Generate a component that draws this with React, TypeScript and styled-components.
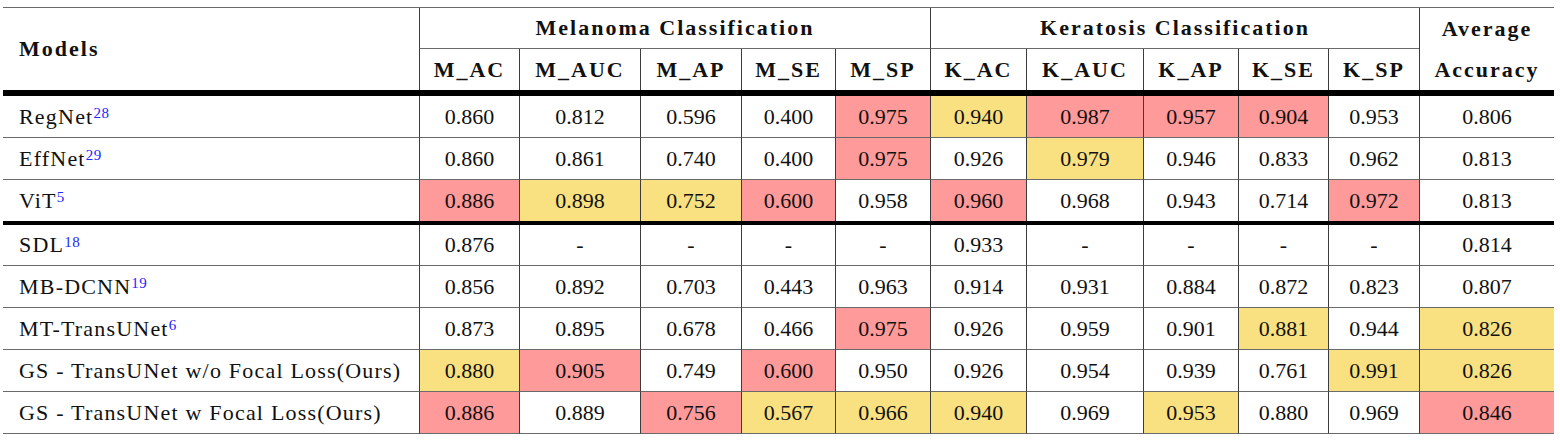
import React from "react";
import styled, { createGlobalStyle } from "styled-components";

const SERIF = `"Liberation Serif", "Times New Roman", Tinos, "DejaVu Serif", serif`;

const GlobalStyle = createGlobalStyle`
  html, body { margin: 0; padding: 0; background: #ffffff; }
  body { font-family: ${SERIF}; color: #111; }
`;

type HL = "r" | "y" | undefined;

const RED = "#ff9a9a";
const YELLOW = "#f9e181";
const VLINE = "#3c3c3c";
const HLINE = "#6a6a6a";

const Page = styled.div`
  padding: 7px 0 0 3px;
  font-family: ${SERIF};
`;

const Table = styled.div`
  display: grid;
  width: 1551px;
  font-family: ${SERIF};
  grid-template-columns: 416px 100px 121px 101px 94px 95px 96px 117px 95px 90px 91px 135px;
  grid-template-rows: 41px 41px 6px 42px 42px 41px 4px 41px 42px 42px 42px 42px;
  border-top: 1px solid ${HLINE};
`;

const HeadCell = styled.div<{ $col: string; $row: string; $cline?: boolean; $first?: boolean }>`
  grid-column: ${(p) => p.$col};
  grid-row: ${(p) => p.$row};
  box-sizing: border-box;
  display: flex;
  align-items: center;
  justify-content: ${(p) => (p.$first ? "flex-start" : "center")};
  padding-left: ${(p) => (p.$first ? "16px" : "0")};
  border-left: ${(p) => (p.$first ? "none" : `1px solid ${VLINE}`)};
  border-bottom: ${(p) => (p.$cline ? `1px solid ${HLINE}` : "none")};
  font-family: ${SERIF};
  font-weight: 700;
  font-size: 22px;
  letter-spacing: 2px;
  color: #111;
  white-space: nowrap;
`;

const StackCell = styled.div`
  grid-column: 12;
  grid-row: 1 / 3;
  box-sizing: border-box;
  border-left: 1px solid ${VLINE};
  display: flex;
  flex-direction: column;
  font-family: ${SERIF};
  font-weight: 700;
  font-size: 22px;
  letter-spacing: 2px;
  color: #111;
`;

const StackLine = styled.span`
  height: 41px;
  display: flex;
  align-items: center;
  justify-content: center;
`;

const Rule = styled.div`
  grid-column: 1 / -1;
  background: #000;
`;

const ModelCell = styled.div<{ $last?: boolean }>`
  box-sizing: border-box;
  display: flex;
  align-items: center;
  padding-left: 16px;
  font-family: ${SERIF};
  font-size: 22px;
  letter-spacing: 1.2px;
  white-space: nowrap;
  color: #111;
  border-bottom: ${(p) => (p.$last ? "none" : `1px solid ${HLINE}`)};
`;

const Sup = styled.sup`
  color: #2424ff;
  font-size: 15px;
  letter-spacing: 0.5px;
  position: relative;
  top: -3px;
`;

const NumCell = styled.div<{ $hl: HL; $last?: boolean }>`
  box-sizing: border-box;
  display: flex;
  align-items: center;
  justify-content: center;
  font-family: ${SERIF};
  font-size: 22px;
  color: #111;
  border-left: 1px solid ${VLINE};
  border-bottom: ${(p) => (p.$last ? "none" : `1px solid ${HLINE}`)};
  background: ${(p) => (p.$hl === "r" ? RED : p.$hl === "y" ? YELLOW : "transparent")};
`;

type Row = { name: string; ref: string; vals: [string, HL][]; last?: boolean };

const R = (s: string): [string, HL] => [s, "r"];
const Y = (s: string): [string, HL] => [s, "y"];
const N = (s: string): [string, HL] => [s, undefined];

const groupA: Row[] = [
  {
    name: "RegNet",
    ref: "28",
    vals: [N("0.860"), N("0.812"), N("0.596"), N("0.400"), R("0.975"), Y("0.940"), R("0.987"), R("0.957"), R("0.904"), N("0.953"), N("0.806")],
  },
  {
    name: "EffNet",
    ref: "29",
    vals: [N("0.860"), N("0.861"), N("0.740"), N("0.400"), R("0.975"), N("0.926"), Y("0.979"), N("0.946"), N("0.833"), N("0.962"), N("0.813")],
  },
  {
    name: "ViT",
    ref: "5",
    last: true,
    vals: [R("0.886"), Y("0.898"), Y("0.752"), R("0.600"), N("0.958"), R("0.960"), N("0.968"), N("0.943"), N("0.714"), R("0.972"), N("0.813")],
  },
];

const groupB: Row[] = [
  {
    name: "SDL",
    ref: "18",
    vals: [N("0.876"), N("-"), N("-"), N("-"), N("-"), N("0.933"), N("-"), N("-"), N("-"), N("-"), N("0.814")],
  },
  {
    name: "MB-DCNN",
    ref: "19",
    vals: [N("0.856"), N("0.892"), N("0.703"), N("0.443"), N("0.963"), N("0.914"), N("0.931"), N("0.884"), N("0.872"), N("0.823"), N("0.807")],
  },
  {
    name: "MT-TransUNet",
    ref: "6",
    vals: [N("0.873"), N("0.895"), N("0.678"), N("0.466"), R("0.975"), N("0.926"), N("0.959"), N("0.901"), Y("0.881"), N("0.944"), Y("0.826")],
  },
  {
    name: "GS - TransUNet w/o Focal Loss(Ours)",
    ref: "",
    vals: [Y("0.880"), R("0.905"), N("0.749"), R("0.600"), N("0.950"), N("0.926"), N("0.954"), N("0.939"), N("0.761"), Y("0.991"), Y("0.826")],
  },
  {
    name: "GS - TransUNet w Focal Loss(Ours)",
    ref: "",
    vals: [R("0.886"), N("0.889"), R("0.756"), Y("0.567"), Y("0.966"), Y("0.940"), N("0.969"), Y("0.953"), N("0.880"), N("0.969"), R("0.846")],
  },
];

const subHeads = ["M_AC", "M_AUC", "M_AP", "M_SE", "M_SP", "K_AC", "K_AUC", "K_AP", "K_SE", "K_SP"];

function BodyRow({ row }: { row: Row }) {
  return (
    <>
      <ModelCell $last={row.last}>
        {row.name}
        {row.ref && <Sup>{row.ref}</Sup>}
      </ModelCell>
      {row.vals.map(([v, hl], i) => (
        <NumCell key={i} $hl={hl} $last={row.last}>
          {v}
        </NumCell>
      ))}
    </>
  );
}

export default function App() {
  return (
    <>
      <GlobalStyle />
      <Page>
        <Table>
          <HeadCell $col="1" $row="1 / 3" $first>
            Models
          </HeadCell>
          <HeadCell $col="2 / 7" $row="1" $cline>
            Melanoma Classification
          </HeadCell>
          <HeadCell $col="7 / 12" $row="1" $cline>
            Keratosis Classification
          </HeadCell>
          <StackCell>
            <StackLine>Average</StackLine>
            <StackLine>Accuracy</StackLine>
          </StackCell>
          {subHeads.map((h, i) => (
            <HeadCell key={h} $col={String(i + 2)} $row="2">
              {h}
            </HeadCell>
          ))}
          <Rule />
          {groupA.map((r) => (
            <BodyRow key={r.name} row={r} />
          ))}
          <Rule />
          {groupB.map((r) => (
            <BodyRow key={r.name} row={r} />
          ))}
        </Table>
      </Page>
    </>
  );
}
